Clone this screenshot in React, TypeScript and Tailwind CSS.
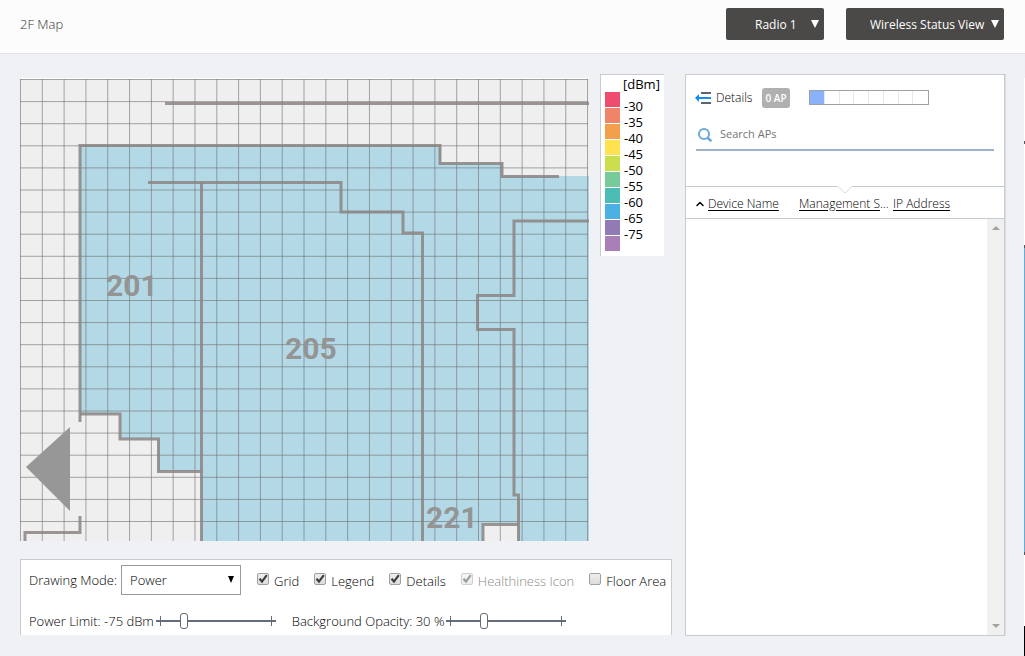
import { ChevronUp } from "lucide-react";

const LEGEND = [
  { color: "#ee4d6f", label: "-30" },
  { color: "#ef8466", label: "-35" },
  { color: "#f3a04d", label: "-40" },
  { color: "#fee34e", label: "-45" },
  { color: "#cbde4d", label: "-50" },
  { color: "#77ca99", label: "-55" },
  { color: "#4bbdb5", label: "-60" },
  { color: "#4bb1e2", label: "-65" },
  { color: "#927bb5", label: "-75" },
  { color: "#a97fb8", label: "" },
];

const OPTIONS = [
  { label: "Grid", checked: true, disabled: false },
  { label: "Legend", checked: true, disabled: false },
  { label: "Details", checked: true, disabled: false },
  { label: "Healthiness Icon", checked: true, disabled: true },
  { label: "Floor Area", checked: false, disabled: false },
];

const GRID_COLS = Array.from({ length: 27 }, (_, i) => i * 21.81 + 0.5);
const GRID_ROWS = Array.from({ length: 21 }, (_, i) => i * 22.1 + 1.5);

const WALLS = [
  "M145 25.5H569",
  "M60 344V67.5H420V85.5H482V98.5H539",
  "M128 104.5H321V134H383V155H402.5V463",
  "M181.5 105V463",
  "M60 336H100V361H138.5V393.5H181",
  "M5 463V454.5H60V438",
  "M569 143H494V217.5H457.5V251.5H494V417H498.5V463",
  "M463 463V446.5H498",
];

function FloorMap() {
  return (
    <svg
      viewBox="0 0 569 463"
      preserveAspectRatio="xMinYMin slice"
      className="mt-1 h-[463px] min-w-0 flex-1 bg-[#efefef]"
      role="img"
      aria-label="2F floor map"
    >
      <path d="M0 0H569V1H0Z" fill="#fff" />
      <path
        d="M60 67H421V85H483V98H569V463H498V446H463V463H181V393H138V361H100V336H60Z"
        fill="#b3d9e7"
      />
      <g fill="none" stroke="#6e6e6e" strokeOpacity="0.6">
        {GRID_COLS.map((x) => (
          <path key={x} d={`M${x} 1V463`} />
        ))}
        {GRID_ROWS.map((y) => (
          <path key={y} d={`M0 ${y}H568`} />
        ))}
      </g>
      <g fill="none" stroke="#8c8482" strokeOpacity="0.85" strokeWidth="3">
        {WALLS.map((d) => (
          <path key={d} d={d} />
        ))}
      </g>
      <path d="M6 389L50 349V433Z" fill="#979797" />
      <g fill="#949494" className="font-['Roboto',sans-serif] text-[30px] font-bold">
        <text x="86" y="218">201</text>
        <text x="265" y="281">205</text>
        <text x="406" y="450">221</text>
      </g>
    </svg>
  );
}

function Legend() {
  return (
    <div className="h-[182px] w-16 shrink-0 border-t border-l border-[#c8ccd0] bg-white text-[13px] leading-4 text-black">
      <p className="pt-px pl-[22px]">[dBm]</p>
      <ul>
        {LEGEND.map((item) => (
          <li key={item.color} className="flex h-4 gap-1 pl-1">
            <span className="h-[15px] w-[15px]" style={{ background: item.color }} />
            <span className="pt-1.5">{item.label}</span>
          </li>
        ))}
      </ul>
    </div>
  );
}

function HeaderSelect({ label, value, className }: { label: string; value: string; className: string }) {
  return (
    <div className="relative">
      <select
        aria-label={label}
        className={`h-8 appearance-none rounded-xs bg-[#4a4948] pt-0.5 text-[12px] font-medium text-white ${className}`}
      >
        <option>{value}</option>
      </select>
      <svg
        viewBox="0 0 10 10"
        className="pointer-events-none absolute top-[11px] right-1 h-2.5 w-2.5 fill-white"
        aria-hidden="true"
      >
        <path d="M1 1H9L5 9Z" />
      </svg>
    </div>
  );
}

function Slider({ label, value, min, max }: { label: string; value: number; min: number; max: number }) {
  return (
    <label className="flex items-center gap-0.5 leading-5 whitespace-nowrap">
      {label}
      <span className="flex h-4 w-[120px] items-center bg-[linear-gradient(#636c78,#636c78),linear-gradient(#636c78,#636c78),linear-gradient(#636c78,#636c78)] bg-[size:100%_2px,1px_10px,1px_10px] bg-[position:center,4px_center,115px_center] bg-no-repeat">
        <input
          type="range"
          min={min}
          max={max}
          defaultValue={value}
          className="h-4 w-full appearance-none bg-transparent [&::-webkit-slider-thumb]:h-4 [&::-webkit-slider-thumb]:w-2 [&::-webkit-slider-thumb]:appearance-none [&::-webkit-slider-thumb]:rounded-[3px] [&::-webkit-slider-thumb]:border [&::-webkit-slider-thumb]:border-[#636c78] [&::-webkit-slider-thumb]:bg-white"
        />
      </span>
    </label>
  );
}

function Checkbox({ label, checked, disabled }: { label: string; checked: boolean; disabled: boolean }) {
  return (
    <label className={`flex gap-[5px] whitespace-nowrap ${disabled ? "text-[#888]" : ""}`}>
      <span className={`mt-0.5 grid h-3 w-3 ${disabled ? "opacity-50" : ""}`}>
        <input
          type="checkbox"
          defaultChecked={checked}
          disabled={disabled}
          className="peer col-start-1 row-start-1 h-3 w-3 appearance-none rounded-xs border border-[#a0a0a0] bg-linear-to-b from-[#eee] to-[#dcdcdc]"
        />
        <svg
          viewBox="0 0 12 12"
          className="pointer-events-none invisible col-start-1 row-start-1 h-3 w-3 peer-checked:visible"
          fill="none"
          stroke="#3c3c3c"
          strokeWidth="2.2"
          aria-hidden="true"
        >
          <path d="M2.5 5.8L5 8.6L9.8 2.2" />
        </svg>
      </span>
      <span className="leading-5">{label}</span>
    </label>
  );
}

function Controls() {
  return (
    <form className="mt-[18px] h-[76px] overflow-hidden border border-b-0 border-[#c8ccd0] bg-white pt-[5px] pl-2 text-[13px] font-light text-black">
      <div className="flex items-center">
        <label htmlFor="mode" className="pt-0.5 whitespace-nowrap">Drawing Mode:</label>
        <div className="relative ml-1 shrink-0">
          <select
            id="mode"
            className="block h-[30px] w-[120px] appearance-none border border-[#999] bg-white pt-0.5 pl-2"
          >
            <option>Power</option>
          </select>
          <svg
            viewBox="0 0 8 8"
            className="pointer-events-none absolute top-[11px] right-1.5 h-2 w-2"
            aria-hidden="true"
          >
            <path d="M1 0H7L4 7Z" />
          </svg>
        </div>
        <div className="ml-4 flex gap-[15px] pt-0.5">
          {OPTIONS.map((option) => (
            <Checkbox key={option.label} {...option} />
          ))}
        </div>
      </div>
      <div className="mt-4 flex gap-4">
        <Slider label="Power Limit: -75 dBm" value={-75} min={-90} max={-20} />
        <Slider label="Background Opacity: 30 %" value={30} min={0} max={100} />
      </div>
    </form>
  );
}

function DetailsPanel() {
  return (
    <aside className="flex w-80 shrink-0 flex-col border border-[#c8ccd0] bg-white text-[12px] font-light text-black shadow-[1px_0_0_#dcdee2]">
      <div className="flex h-[45px] items-center pl-[9px]">
        <svg viewBox="0 0 17 14" className="h-3.5 w-[17px]" fill="none" strokeWidth="2" aria-hidden="true">
          <path d="M6 2H16M6 12H16" stroke="#5b6472" />
          <path d="M3 7H16" stroke="#148cf5" />
          <path d="M0 7L4 3V11Z" fill="#148cf5" />
        </svg>
        <h2 className="ml-1 w-9 whitespace-nowrap">Details</h2>
        <span className="ml-2.5 w-7 rounded-[3px] bg-[#b0b0b0] text-center text-[10px] leading-5 font-semibold whitespace-nowrap text-white">
          0 AP
        </span>
        <div className="ml-[19px] grid h-[15px] w-[120px] grid-cols-8 divide-x divide-[#e8e8e8] border border-[#a0a0a0]">
          <span className="bg-[#89b2f8]" />
          {Array.from({ length: 7 }, (_, i) => (
            <span key={i} />
          ))}
        </div>
      </div>

      {/* Search */}
      <label className="mx-2.5 flex h-[31px] items-center border-b-2 border-[#9db3c9] pl-0.5">
        <svg viewBox="0 0 14 14" className="h-3.5 w-3.5" fill="none" stroke="#6fa8e0" aria-hidden="true">
          <circle cx="6" cy="6" r="5" strokeWidth="2" />
          <path d="M9.5 9.5L13.3 13.3" strokeWidth="2.6" />
        </svg>
        <input
          type="text"
          placeholder="Search APs"
          aria-label="Search APs"
          className="ml-2 min-w-0 flex-1 text-[11px] font-normal outline-none placeholder:text-[#757575]"
        />
      </label>

      {/* AP list */}
      <div className="relative mt-[35px] border-y border-[#c5cacc]">
        <svg
          viewBox="0 0 16 8"
          className="absolute -top-px left-[151px] h-2 w-4"
          fill="#fff"
          stroke="#d4d8da"
          aria-hidden="true"
        >
          <path d="M0.5 0L8 7L15.5 0" />
          <path d="M1 0H15" stroke="#fff" />
        </svg>
        <table className="w-full table-fixed text-left">
          <thead>
            <tr className="h-[31px]">
              <th className="w-[113px] pt-0.5 pl-2 font-light">
                <span className="flex items-center gap-0.5">
                  <ChevronUp className="h-3 w-3" strokeWidth={3} />
                  <a href="#name" className="underline underline-offset-2">Device Name</a>
                </span>
              </th>
              <th className="w-[94px] truncate pt-0.5 pr-1 font-light">
                <a href="#status" className="underline underline-offset-2">Management S</a>...
              </th>
              <th className="pt-0.5 font-light">
                <a href="#ip" className="underline underline-offset-2">IP Address</a>
              </th>
            </tr>
          </thead>
        </table>
      </div>
      <div className="flex flex-1 justify-end">
        <div className="flex w-[17px] flex-col items-center justify-between bg-[#f0f0f0] py-[7px]">
          <svg viewBox="0 0 8 4" className="h-1 w-2 fill-[#a3a3a3]" aria-hidden="true">
            <path d="M0 4L4 0L8 4Z" />
          </svg>
          <svg viewBox="0 0 8 4" className="h-1 w-2 fill-[#a3a3a3]" aria-hidden="true">
            <path d="M0 0L4 4L8 0Z" />
          </svg>
        </div>
      </div>
    </aside>
  );
}

// Edge of the next map, peeking in from the right
function NextMapEdge() {
  return (
    <div className="absolute top-[78px] right-0 bottom-0 flex w-px flex-col bg-white" aria-hidden="true">
      <span className="mt-[63px] h-[3px] bg-[#555]" />
      <span className="mt-[101px] h-[3px] bg-[#555]" />
      <span className="h-[304px] bg-[#5eaedb]" />
      <span className="h-[3px] bg-[#555]" />
      <span className="mt-[71px] flex-1 bg-black" />
    </div>
  );
}

export default function App() {
  return (
    <div className="relative min-h-screen bg-[#eff1f5] font-['Open_Sans','Noto_Sans',sans-serif]">
      <header className="flex h-[54px] items-center border-b border-[#e2e4e8] bg-[#fcfcfc] pr-[21px] pb-[5px] pl-5">
        <h1 className="flex-1 pt-0.5 text-[13px] font-light text-[#333]">2F Map</h1>
        <div className="flex gap-[22px]">
          <HeaderSelect label="Radio" value="Radio 1" className="w-[98px] pl-[29px]" />
          <HeaderSelect label="View" value="Wireless Status View" className="w-[158px] pl-6" />
        </div>
      </header>
      <main className="flex gap-[13px] px-5 pt-5 pb-5">
        <section className="min-w-0 flex-1 pb-px">
          <div className="flex items-start gap-[11px] pr-2">
            <FloorMap />
            <Legend />
          </div>
          <Controls />
        </section>
        <DetailsPanel />
      </main>
      <NextMapEdge />
    </div>
  );
}
